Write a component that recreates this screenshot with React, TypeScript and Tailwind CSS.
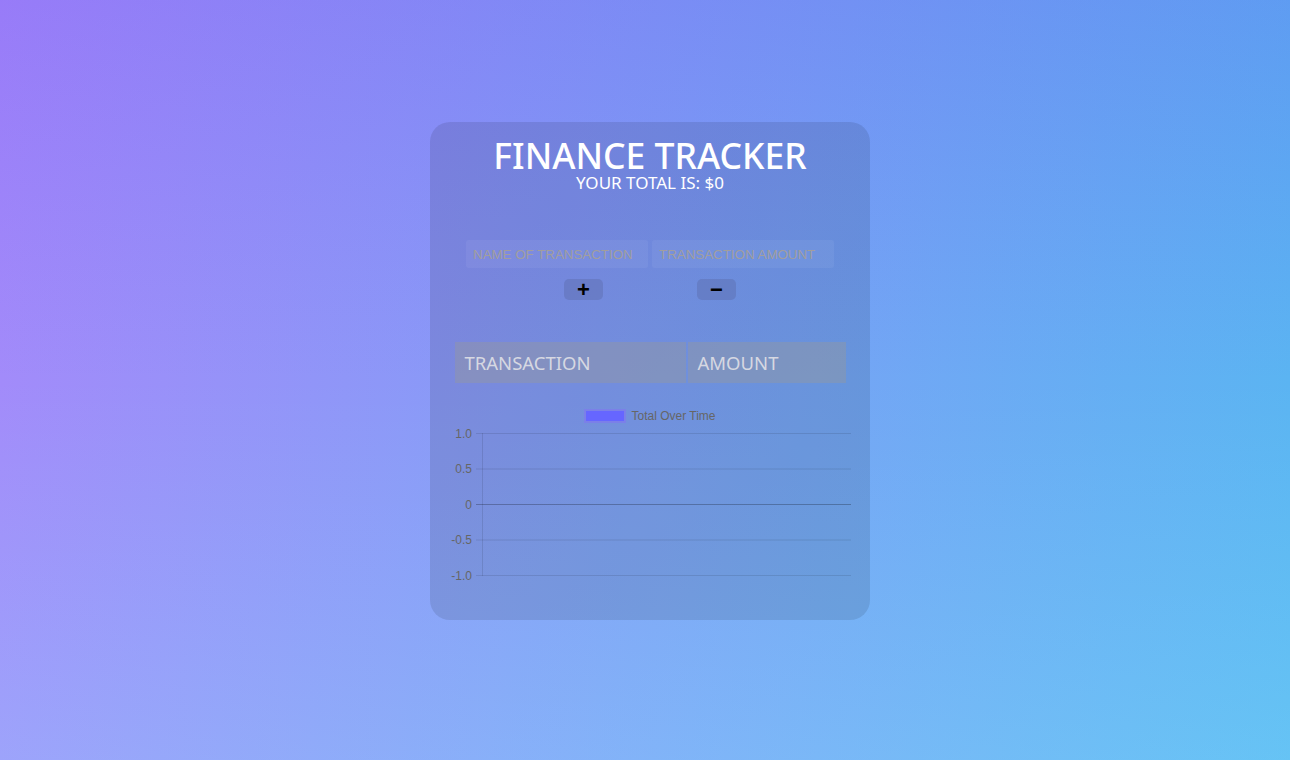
import React from 'react';

const heading = { fontFamily: '"Noto Sans", "Open Sans", sans-serif' };
const body = { fontFamily: '"Liberation Sans", Arial, sans-serif' };

const ticks = [
  { label: '1.0', y: 7.5 },
  { label: '0.5', y: 43 },
  { label: '0', y: 78.5 },
  { label: '-0.5', y: 114 },
  { label: '-1.0', y: 149.5 },
];

function Chart() {
  return (
    <div className="w-[402px] flex flex-col items-center" style={body}>
      <div className="flex items-center gap-[5px] h-[14px]">
        <span className="w-[42px] h-[14px] bg-[#6666ff] border-2 border-[#7b80e8]" />
        <span className="text-[12px] text-[#666]">Total Over Time</span>
      </div>
      <svg width="402" height="156" className="mt-[3px] block">
        {ticks.map((t) => (
          <g key={t.label}>
            <line
              x1="27"
              x2="402"
              y1={t.y}
              y2={t.y}
              stroke={t.label === '0' ? 'rgba(0,0,0,0.25)' : 'rgba(0,0,0,0.1)'}
              strokeWidth="1"
            />
            <text
              x="23"
              y={t.y + 4}
              textAnchor="end"
              fontSize="12"
              fill="#666"
              fontFamily='"Liberation Sans", Arial, sans-serif'
            >
              {t.label}
            </text>
          </g>
        ))}
        <line x1="33.5" x2="33.5" y1="7" y2="150" stroke="rgba(0,0,0,0.1)" />
      </svg>
    </div>
  );
}

export default function App() {
  return (
    <div className="min-h-screen w-full flex justify-center pl-[10px] bg-[linear-gradient(to_bottom,rgba(110,60,240,0.2),rgba(110,60,240,0)_50%,rgba(160,250,255,0)_50%,rgba(140,250,255,0.22)),linear-gradient(to_right,#a28bfa,#5bb4f2)]">
      <div className="mt-[122px] mb-[140px] w-[440px] h-[498px] rounded-[20px] bg-black/10 flex flex-col items-center">
        <h1 className="mt-[16px] text-[35.5px] leading-[34px] font-medium text-white" style={heading}>
          FINANCE TRACKER
        </h1>
        <p className="mt-[1px] text-[17px] leading-[20px] text-white" style={heading}>
          YOUR TOTAL IS: $0
        </p>

        <div className="mt-[47px] flex gap-1" style={body}>
          <input
            className="w-[182px] h-[28px] px-[7px] rounded-[3px] bg-white/5 text-[13.33px] outline-none placeholder:text-[#a19e9e]"
            placeholder="NAME OF TRANSACTION"
          />
          <input
            className="w-[182px] h-[28px] px-[7px] rounded-[3px] bg-white/5 text-[13.33px] outline-none placeholder:text-[#a19e9e]"
            placeholder="TRANSACTION AMOUNT"
          />
        </div>

        <div className="mt-[11px] flex gap-[94px]" style={body}>
          <button className="w-[39px] h-[21px] rounded-[5px] bg-[#5a6aa8]/40 text-black text-[22px] font-semibold leading-none flex items-center justify-center">
            +
          </button>
          <button className="w-[39px] h-[21px] rounded-[5px] bg-[#5a6aa8]/40 text-black text-[22px] font-semibold leading-none flex items-center justify-center">
            −
          </button>
        </div>

        <div className="mt-[42px] w-[391px] flex gap-[2px]" style={heading}>
          <div className="w-[231px] h-[41px] bg-[#999]/40 flex items-center px-[10px] text-[18.5px] text-[#d6d8e2]">
            TRANSACTION
          </div>
          <div className="flex-1 h-[41px] bg-[#999]/40 flex items-center px-[10px] text-[18.5px] text-[#d6d8e2]">
            AMOUNT
          </div>
        </div>

        <div className="mt-[26px]">
          <Chart />
        </div>
      </div>
    </div>
  );
}
